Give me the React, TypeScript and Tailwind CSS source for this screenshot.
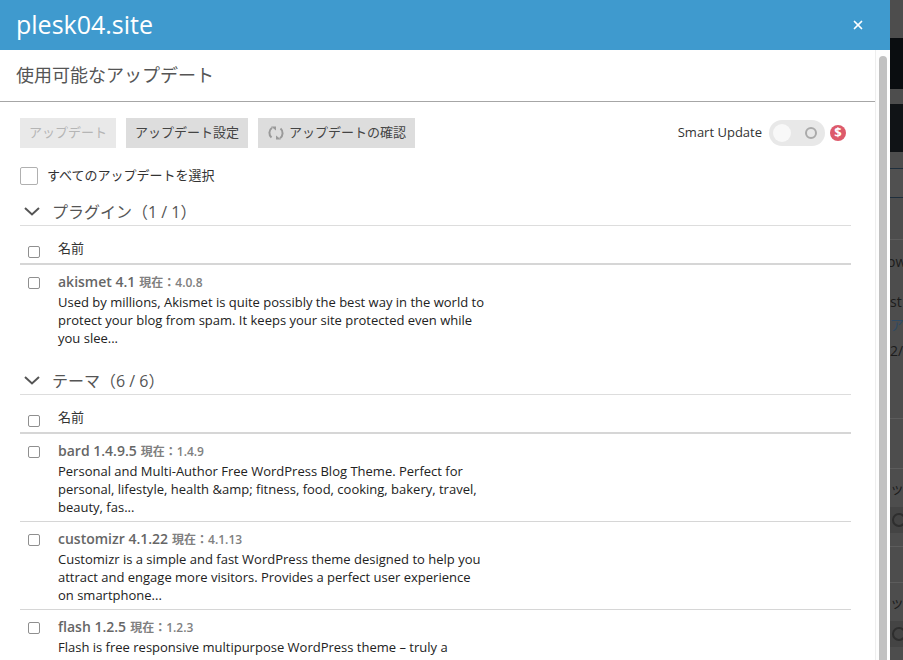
import { X } from "lucide-react";

const font = "font-['Open_Sans','Noto_Sans_CJK_JP',sans-serif]";

function Check({ className = "" }: { className?: string }) {
  return (
    <span
      className={`block h-[12px] w-[12px] shrink-0 rounded-[2px] border border-[#8f8f8f] bg-white ${className}`}
    />
  );
}

function SectionTitle({ title, className = "" }: { title: string; className?: string }) {
  return (
    <div className={`flex h-[28px] items-center border-b border-[#dddddd] pl-[4px] ${className}`}>
      <svg viewBox="0 0 16 9" className="h-[9px] w-[16px]" fill="none" stroke="#555555" strokeWidth="2">
        <path d="M1 1l7 6.5L15 1" />
      </svg>
      <span className="ml-[12px] text-[16px] text-[#555555]">{title}</span>
    </div>
  );
}

function HeadRow() {
  return (
    <div className="flex h-[39px] items-center border-b-2 border-[#d6d6d6] pl-[8px]">
      <Check className="mt-[14px]" />
      <span className="ml-[18px] mt-[9px] text-[13px] text-[#333333]">名前</span>
    </div>
  );
}

function Item({ name, current, desc, last }: { name: string; current: string; desc: string[]; last?: boolean }) {
  return (
    <div className={`flex h-[88px] items-start pl-[8px] pt-[6px] ${last ? "" : "border-b border-[#d6d6d6]"}`}>
      <Check className="mt-[6px]" />
      <div className="ml-[18px]">
        <div className="flex h-[22px] items-baseline">
          <span className="text-[14px] font-semibold text-[#666666]">{name}</span>
          <span className="ml-[4px] text-[12px] font-semibold text-[#808080]">現在：{current}</span>
        </div>
        <div className="text-[13px] leading-[18px] text-[#222222]">
          {desc.map((line) => (
            <div key={line}>{line}</div>
          ))}
        </div>
      </div>
    </div>
  );
}

// 背後のページの見切れた部分
function BackStrip() {
  return (
    <div className="flex w-[13px] shrink-0 flex-col overflow-hidden whitespace-nowrap bg-[#4d4d4d] text-[14px] text-[#1c1c1c]">
      <div className="h-[38px] shrink-0" />
      <div className="h-[51px] shrink-0 bg-[#0a0d10]" />
      <div className="h-[15px] shrink-0" />
      <div className="h-[48px] shrink-0 bg-[#101316]" />
      <div className="h-[16px] shrink-0" />
      <div className="h-[30px] shrink-0 border-y border-[#1f2f3d] bg-[#505050]" />
      <div className="h-[42px] shrink-0 border-b border-[#5c5c5c]" />
      <div className="flex h-[42px] shrink-0 items-center -ml-[3px]">ow</div>
      <div className="flex h-[30px] shrink-0 items-end">st</div>
      <div className="flex h-[24px] shrink-0 items-center text-[#2f4a63]">ア</div>
      <div className="flex h-[28px] shrink-0 items-center">2/</div>
      <div className="h-[55px] shrink-0 border-b border-[#5c5c5c]" />
      <div className="h-[50px] shrink-0 border-b border-[#5c5c5c]" />
      <div className="flex h-[38px] shrink-0 items-center">ッシ</div>
      <div className="flex h-[26px] shrink-0 items-center bg-[#444444] pl-[2px]">
        <span className="h-[14px] w-[14px] shrink-0 rounded-full border-2 border-[#2e2e2e]" />
      </div>
      <div className="h-[14px] shrink-0 border-b border-[#5c5c5c]" />
      <div className="h-[36px] shrink-0 border-b border-[#5c5c5c]" />
      <div className="flex h-[38px] shrink-0 items-center">ック</div>
      <div className="flex h-[26px] shrink-0 items-center bg-[#444444] pl-[2px]">
        <span className="h-[14px] w-[14px] shrink-0 rounded-full border-2 border-[#2e2e2e]" />
      </div>
    </div>
  );
}

export default function App() {
  return (
    <div className={`flex h-[660px] w-[903px] overflow-hidden bg-[#4d4d4d] ${font}`}>
      <div className="flex w-[890px] shrink-0 flex-col">
        <div className="flex h-[50px] shrink-0 items-center justify-between bg-[#3f9ace] pl-[16px] pr-[25px]">
          <span className="text-[25px] text-white">plesk04.site</span>
          <X className="h-[14px] w-[14px] text-white" strokeWidth={3} />
        </div>
        <div className="flex min-h-0 flex-1 bg-white">
          <div className="w-[875px] shrink-0 overflow-hidden">
            <div className="flex h-[52px] items-center border-b border-[#a6a6a6] pl-[16px]">
              <span className="text-[18px] text-[#555555]">使用可能なアップデート</span>
            </div>
            <div className="pl-[20px] pr-[24px]">
              <div className="mt-[16px] flex h-[30px] items-center">
                <button className="h-[30px] w-[96px] bg-[#e9e9e9] text-[13px] text-[#b5b5b5]">アップデート</button>
                <button className="ml-[10px] h-[30px] w-[122px] bg-[#dddddd] text-[13px] text-[#444444]">アップデート設定</button>
                <button className="ml-[10px] flex h-[30px] w-[157px] items-center justify-center bg-[#dddddd] text-[13px] text-[#444444]">
                  <svg viewBox="0 0 18 18" className="mr-[4px] h-[18px] w-[18px]" fill="none" stroke="#9a9a9a" strokeWidth="2">
                    <path d="M4.5 13.5A6.2 6.2 0 0 1 5 3.8" />
                    <path d="M13.5 4.5A6.2 6.2 0 0 1 13 14.2" />
                    <path d="M4 2.5h5v4z" fill="#9a9a9a" stroke="none" />
                    <path d="M14 15.5H9v-4z" fill="#9a9a9a" stroke="none" />
                  </svg>
                  アップデートの確認
                </button>
                <span className="ml-auto text-[13px] text-[#333333]">Smart Update</span>
                <span className="ml-[7px] flex h-[26px] w-[56px] items-center justify-between rounded-full bg-[#e8e8e8] pl-[4px] pr-[8px]">
                  <span className="h-[18px] w-[18px] rounded-full bg-[#f8f8f8]" />
                  <span className="h-[12px] w-[12px] rounded-full border-2 border-[#aaaaaa]" />
                </span>
                <span className="ml-[5px] mr-[5px] flex h-[16px] w-[16px] items-center justify-center rounded-full bg-[#dd5a6b] text-[13px] font-bold text-white">$</span>
              </div>
              <div className="mt-[10px] flex h-[36px] items-center">
                <span className="h-[18px] w-[18px] rounded-[2px] border border-[#b0b0b0] bg-white" />
                <span className="ml-[9px] text-[13px] text-[#333333]">すべてのアップデートを選択</span>
              </div>
              <SectionTitle title="プラグイン（1 / 1）" className="mt-[4px]" />
              <HeadRow />
              <Item
                name="akismet 4.1"
                current="4.0.8"
                last
                desc={[
                  "Used by millions, Akismet is quite possibly the best way in the world to",
                  "protect your blog from spam. It keeps your site protected even while",
                  "you slee...",
                ]}
              />
              <SectionTitle title="テーマ（6 / 6）" className="mt-[14px]" />
              <HeadRow />
              <Item
                name="bard 1.4.9.5"
                current="1.4.9"
                desc={[
                  "Personal and Multi-Author Free WordPress Blog Theme. Perfect for",
                  "personal, lifestyle, health &amp; fitness, food, cooking, bakery, travel,",
                  "beauty, fas...",
                ]}
              />
              <Item
                name="customizr 4.1.22"
                current="4.1.13"
                desc={[
                  "Customizr is a simple and fast WordPress theme designed to help you",
                  "attract and engage more visitors. Provides a perfect user experience",
                  "on smartphone...",
                ]}
              />
              <Item
                name="flash 1.2.5"
                current="1.2.3"
                last
                desc={["Flash is free responsive multipurpose WordPress theme – truly a"]}
              />
            </div>
          </div>
          <div className="w-[15px] shrink-0 border-l border-[#eeeeee] bg-[#fdfdfd] pl-[3px] pt-[6px]">
            <div className="h-full w-[8px] rounded-t-full bg-[#c1c1c1]" />
          </div>
        </div>
      </div>
      <BackStrip />
    </div>
  );
}
